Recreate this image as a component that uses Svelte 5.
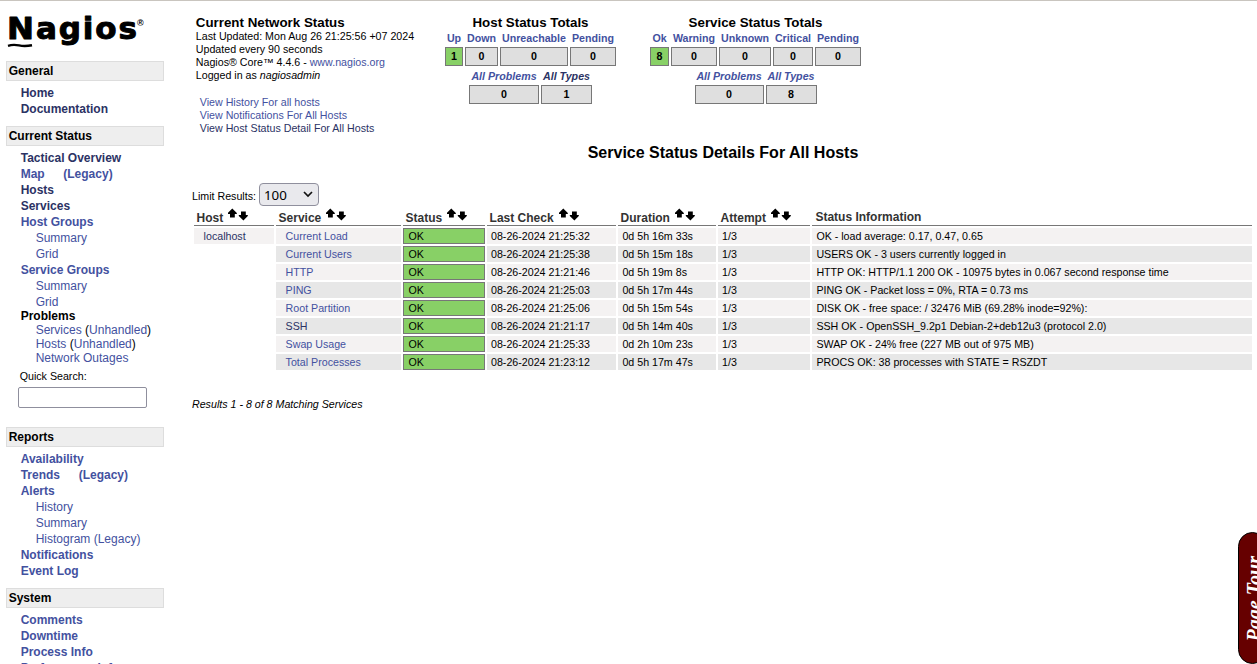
<script>
  const nav = [
    { title: 'General', items: [
      { t: 'Home', v: 1 }, { t: 'Documentation', v: 1 } ] },
    { title: 'Current Status', items: [
      { t: 'Tactical Overview', v: 1 }, { t: 'Map', legacy: 1 }, { t: 'Hosts', v: 1 }, { t: 'Services', v: 1 },
      { t: 'Host Groups' }, { t: 'Summary', sub: 1 }, { t: 'Grid', sub: 1 },
      { t: 'Service Groups' }, { t: 'Summary', sub: 1 }, { t: 'Grid', sub: 1 } ] },
    { title: 'Reports', items: [
      { t: 'Availability' }, { t: 'Trends', legacy: 1 }, { t: 'Alerts' }, { t: 'History', sub: 1 },
      { t: 'Summary', sub: 1 }, { t: 'Histogram (Legacy)', sub: 1 }, { t: 'Notifications' }, { t: 'Event Log' } ] },
    { title: 'System', items: [
      { t: 'Comments' }, { t: 'Downtime' }, { t: 'Process Info' }, { t: 'Performance Info' } ] }
  ];
  const totals = [
    { title: 'Host Status Totals', cls: 'hosts', cells: [['Up', 1], ['Down', 0], ['Unreachable', 0], ['Pending', 0]], all: 1, visited: true },
    { title: 'Service Status Totals', cls: 'services', cells: [['Ok', 8], ['Warning', 0], ['Unknown', 0], ['Critical', 0], ['Pending', 0]], all: 8, visited: false }
  ];
  const heads = ['Host', 'Service', 'Status', 'Last Check', 'Duration', 'Attempt'];
  const rows = [
    ['Current Load', '21:25:32', '0d 5h 16m 33s', 'OK - load average: 0.17, 0.47, 0.65'],
    ['Current Users', '21:25:38', '0d 5h 15m 18s', 'USERS OK - 3 users currently logged in'],
    ['HTTP', '21:21:46', '0d 5h 19m 8s', 'HTTP OK: HTTP/1.1 200 OK - 10975 bytes in 0.067 second response time'],
    ['PING', '21:25:03', '0d 5h 17m 44s', 'PING OK - Packet loss = 0%, RTA = 0.73 ms'],
    ['Root Partition', '21:25:06', '0d 5h 15m 54s', 'DISK OK - free space: / 32476 MiB (69.28% inode=92%):'],
    ['SSH', '21:21:17', '0d 5h 14m 40s', 'SSH OK - OpenSSH_9.2p1 Debian-2+deb12u3 (protocol 2.0)'],
    ['Swap Usage', '21:25:33', '0d 2h 10m 23s', 'SWAP OK - 24% free (227 MB out of 975 MB)'],
    ['Total Processes', '21:23:12', '0d 5h 17m 47s', 'PROCS OK: 38 processes with STATE = RSZDT']
  ];
</script>

<div class="page">
  <aside>
    <div class="logo">
      <svg width="140" height="38" viewBox="0 0 140 38" aria-label="Nagios">
        <g class="word">
          <text x="1" y="28" font-size="31" textLength="27" lengthAdjust="spacingAndGlyphs">N</text>
          <text x="30" y="28" font-size="31" textLength="101" lengthAdjust="spacing">agios</text>
        </g>
        <path d="M2 34.8Q7 33.2 13 34.4T26 34.2" fill="none" stroke="#000" stroke-width="2.4" />
        <text x="131" y="15" font-size="9" font-weight="bold">®</text>
      </svg>
    </div>
    {#each nav as s}
      <section>
        <h2>{s.title}</h2>
        <div class="list">
          {#each s.items as i}
            <div class="item" class:sub={i.sub}><a href="#top" class:visited={i.v}>{i.t}</a>{#if i.legacy}<a href="#top" class="legacy">(Legacy)</a>{/if}</div>
          {/each}
        </div>
        {#if s.title === 'Current Status'}
          <div class="problems">
            <b>Problems</b>
            <div><a href="#top">Services</a> (<a href="#top">Unhandled</a>)</div>
            <div><a href="#top">Hosts</a> (<a href="#top">Unhandled</a>)</div>
            <div><a href="#top">Network Outages</a></div>
          </div>
          <div class="search"><label for="q">Quick Search:</label><input id="q" /></div>
        {/if}
      </section>
    {/each}
  </aside>

  <main>
    <header>
      <div class="info">
        <h3>Current Network Status</h3>
        <div>Last Updated: Mon Aug 26 21:25:56 +07 2024</div>
        <div>Updated every 90 seconds</div>
        <div>Nagios® Core™ 4.4.6 - <a href="#top">www.nagios.org</a></div>
        <div>Logged in as <i>nagiosadmin</i></div>
        <div class="views">
          <div><a href="#top">View History For all hosts</a></div>
          <div><a href="#top">View Notifications For All Hosts</a></div>
          <div><a href="#top" class="visited">View Host Status Detail For All Hosts</a></div>
        </div>
      </div>
      {#each totals as t}
        <div class="totals {t.cls}">
          <h3>{t.title}</h3>
          <div class="counts">
            {#each t.cells as c}<a href="#top">{c[0]}</a>{/each}
            {#each t.cells as c, k}<span class="box" class:ok={k === 0}>{c[1]}</span>{/each}
          </div>
          <div class="counts sums">
            <a href="#top">All Problems</a><a href="#top" class:visited={t.visited}>All Types</a>
            <span class="box">0</span><span class="box">{t.all}</span>
          </div>
        </div>
      {/each}
    </header>

    <h1>Service Status Details For All Hosts</h1>

    <div class="limit">
      <span>Limit Results:</span>
      <div class="select"><span>100</span>
        <svg width="10" height="7" viewBox="0 0 10 7"><path d="M1 1L5 5L9 1" fill="none" stroke="#111" stroke-width="1.7" /></svg>
      </div>
    </div>

    <div class="grid">
      {#each heads as h}
        <div class="th"><span>{h}</span>
          <svg width="21" height="13" viewBox="0 0 21 13" fill="#000"><path d="M4.3 .5L8.8 5V6H6.8V9.5H2V6H-.2V5ZM13 3.5H17.8V7H19.8V8L15.4 12.4L10.8 8V7H13Z" /></svg>
        </div>
      {/each}
      <div class="th last"><span>Status Information</span></div>
      {#each rows as r, k}
        <div class="td host" class:blank={k > 0}>{#if k === 0}<a href="#top" class="visited">localhost</a>{/if}</div>
        <div class="td svc" class:odd={k % 2}><a href="#top" class:visited={r[0] === 'SSH'}>{r[0]}</a></div>
        <div class="td state">OK</div>
        <div class="td check" class:odd={k % 2}>08-26-2024 {r[1]}</div>
        <div class="td" class:odd={k % 2}>{r[2]}</div>
        <div class="td check" class:odd={k % 2}>1/3</div>
        <div class="td" class:odd={k % 2}>{r[3]}</div>
      {/each}
    </div>

    <div class="results">Results 1 - 8 of 8 Matching Services</div>
  </main>
  <div class="tour"><span>Page Tour</span></div>
</div>

<style>
  .page { position: relative; box-sizing: border-box; width: 1257px; height: 664px; overflow: hidden; display: flex; border-top: 1px solid #c9c5bf; background: #fff; color: #000; font-family: "Liberation Sans", Arial, sans-serif; font-size: 10.667px; line-height: 13px; }
  a { color: #4351a0; text-decoration: none; }
  a.visited { color: #2b3264; }
  aside { flex: none; width: 158px; padding: 10px 22px 0 6px; font-size: 12px; }
  .logo { height: 50px; }
  .logo svg { display: block; overflow: visible; }
  .word { font-family: "DejaVu Sans", sans-serif; font-weight: bold; stroke: #000; stroke-width: 1; stroke-linejoin: round; }
  h2 { box-sizing: border-box; height: 20px; margin: 0; padding-left: 1.7px; border: 1px solid #ddd; background: #eee; font-size: 12px; line-height: 19px; }
  .list { padding: 4px 0 0 14.7px; }
  .item { height: 16px; line-height: 16px; font-weight: bold; white-space: nowrap; }
  .item.sub { padding-left: 15px; font-weight: normal; }
  .legacy { margin-left: 18.6px; }
  section { margin-bottom: 9px; }
  .problems { padding-left: 14.7px; line-height: 14px; margin-top: -1px; white-space: nowrap; }
  .problems b { display: block; height: 14px; }
  .problems div { padding-left: 15px; }
  .search { padding: 5px 0 0 12px; height: 53px; box-sizing: border-box; font-size: 10.667px; }
  .search label { display: block; padding-left: 1.7px; line-height: 13px; margin-bottom: 4px; }
  .search input { display: block; box-sizing: border-box; width: 129px; height: 21px; border: 1px solid #8f8f9d; border-radius: 2px; background: #fff; }
  main { flex: 1; min-width: 0; padding: 14px 3px 0 6px; }
  header { display: flex; height: 129px; }
  .info { width: 251px; padding-left: 3.8px; white-space: nowrap; box-sizing: border-box; }
  h3 { margin: 0; font-size: 13.333px; line-height: 15px; }
  .views { padding: 14px 0 0 4px; }
  .totals { text-align: center; font-weight: bold; }
  .hosts { width: 175px; margin-right: 30px; }
  .services { width: 215px; }
  .counts { display: grid; column-gap: 2px; grid-template-rows: 17px 19px; justify-content: center; line-height: 17px; }
  .hosts .counts { grid-template-columns: 18px 33px 68px 46px; }
  .services .counts { grid-template-columns: 19px 46px 52px 40px 46px; }
  .hosts .sums { grid-template-columns: 70px 51px; }
  .services .sums { grid-template-columns: 69px 51px; }
  .sums { margin-top: 2px; }
  .sums a { font-style: italic; }
  .box { border: 1px solid #777; background: #dfdfdf; }
  .box.ok { background: #88d066; }
  h1 { margin: 0; font-size: 16px; line-height: 18px; text-align: center; }
  .limit { display: flex; align-items: center; gap: 3px; margin-top: 21px; height: 23px; }
  .limit > span { padding-top: 4px; }
  .select { box-sizing: border-box; width: 60px; height: 23px; border: 1px solid #8f8f9d; border-radius: 4px; background: #e9e9ed; display: flex; align-items: center; justify-content: space-between; padding: 0 5px 0 4px; font: 13.333px/22px "Noto Sans", sans-serif; }
  .grid { display: grid; grid-template-columns: 80px 125px 82px 129px 98px 92px 1fr; gap: 2px; padding: 2px 2px 0; }
  .th { box-sizing: border-box; height: 18px; border-bottom: 1px solid #777; padding-left: 2.6px; font-size: 12px; font-weight: bold; color: #333; line-height: 21px; white-space: nowrap; display: flex; gap: 5px; }
  .th.last { line-height: 19px; padding-left: 3.4px; }
  .td { box-sizing: border-box; height: 16px; padding-left: 4.4px; background: #f4f2f2; line-height: 16px; white-space: nowrap; }
  .td.check { padding-left: 4px; }
  .td.odd { background: #e7e7e7; }
  .td.blank { background: none; }
  .td.host, .td.svc { padding-left: 9.6px; }
  .td.state { border: 1px solid #777; background: #88d066; line-height: 14px; }
  .results { margin-top: 28px; font-style: italic; }
  .tour { position: absolute; right: -10px; top: 531px; box-sizing: border-box; width: 29px; height: 132px; border: 1px solid #000; border-radius: 20px; background: #600; }
  .tour span { position: absolute; left: 4px; bottom: 22px; writing-mode: vertical-rl; transform: rotate(180deg); color: #fff; font: italic bold 20px/22px "Liberation Serif", serif; white-space: nowrap; }
</style>
